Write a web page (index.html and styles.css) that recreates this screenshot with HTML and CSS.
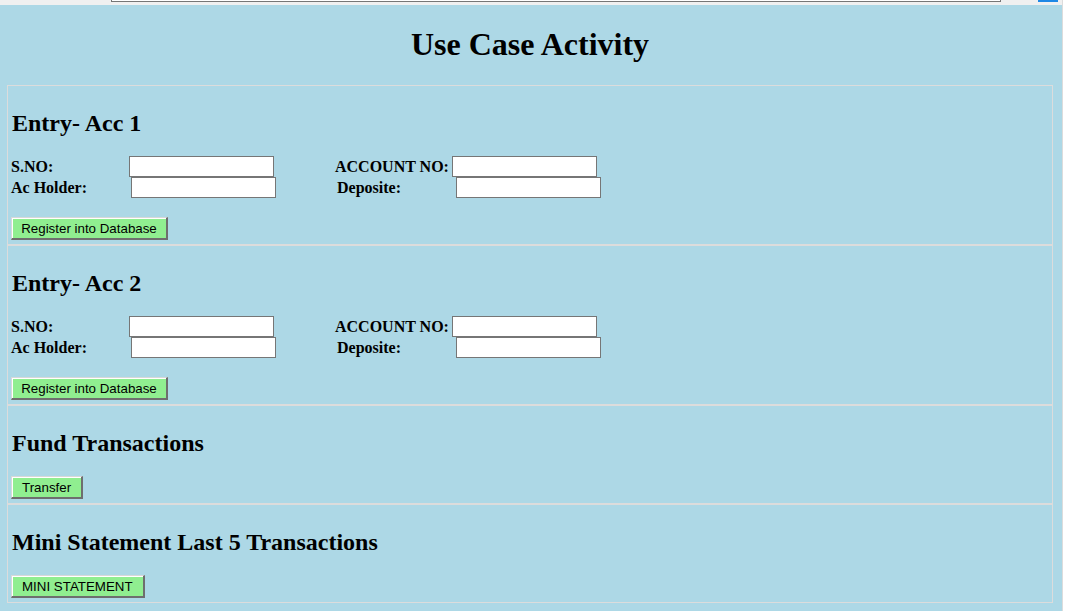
FILE: index.html
```html
<!DOCTYPE html>
<html>
<head>
<meta charset="utf-8">
<title>Use Case Activity</title>
<link rel="stylesheet" href="styles.css">
</head>
<body>
<div class="window">
  <div class="main">
    <div class="chrome">
      <div class="address"></div>
      <div class="chrome-btn"></div>
    </div>
    <div class="page">
      <h1 class="title">Use Case Activity</h1>
      <div class="panel">
        <div class="section">
          <h2 class="heading">Entry- Acc 1</h2>
          <div class="form">
            <div class="row">
              <span class="lbl w118">S.NO:</span><input class="field" type="text">
              <span class="lbl w117 gap">ACCOUNT NO:</span><input class="field" type="text">
            </div>
            <div class="row">
              <span class="lbl w120">Ac Holder:</span><input class="field" type="text">
              <span class="lbl w119 gap">Deposite:</span><input class="field" type="text">
            </div>
          </div>
          <button class="btn btn-form" type="button">Register into Database</button>
        </div>
        <div class="section">
          <h2 class="heading">Entry- Acc 2</h2>
          <div class="form">
            <div class="row">
              <span class="lbl w118">S.NO:</span><input class="field" type="text">
              <span class="lbl w117 gap">ACCOUNT NO:</span><input class="field" type="text">
            </div>
            <div class="row">
              <span class="lbl w120">Ac Holder:</span><input class="field" type="text">
              <span class="lbl w119 gap">Deposite:</span><input class="field" type="text">
            </div>
          </div>
          <button class="btn btn-form" type="button">Register into Database</button>
        </div>
        <div class="section short">
          <h2 class="heading">Fund Transactions</h2>
          <button class="btn" type="button">Transfer</button>
        </div>
        <div class="section short last">
          <h2 class="heading">Mini Statement Last 5 Transactions</h2>
          <button class="btn" type="button">MINI STATEMENT</button>
        </div>
      </div>
    </div>
  </div>
  <div class="edge"></div>
</div>
</body>
</html>
```

FILE: styles.css
```css
* { box-sizing: border-box; }
html, body {
  margin: 0;
  padding: 0;
  height: 611px;
  overflow: hidden;
  background: #ffffff;
}
.window {
  display: flex;
  width: 1066px;
  height: 611px;
}
.main {
  width: 1062px;
  display: flex;
  flex-direction: column;
}
.edge {
  width: 4px;
  border-left: 1px solid #dcdcdc;
  background: #ffffff;
}
.chrome {
  height: 5px;
  background: #f0f0f0;
  display: flex;
  align-items: flex-start;
}
.address {
  margin-left: 111px;
  width: 890px;
  height: 2px;
  border: 1px solid #767676;
  border-top: none;
  background: #ffffff;
}
.chrome-btn {
  margin-left: 37px;
  width: 20px;
  height: 2px;
  background: #1e88e5;
}
.page {
  flex: 1;
  background: #add8e6;
  font-family: "Liberation Serif", "Times New Roman", serif;
  color: #000;
  padding: 0 9px 0 7px;
  overflow: hidden;
}
.title {
  font-size: 32px;
  font-weight: bold;
  text-align: center;
  margin: 21px 0 22px 0;
  line-height: 37px;
}
.panel {
  width: 1046px;
  border: 1px solid #dcdcdc;
}
.section {
  padding: 3px 3px 5px 3px;
  border-bottom: 2px solid #dcdcdc;
  height: 160px;
}
.section.short {
  height: 99px;
}
.section.last {
  border-bottom: none;
  height: 97px;
}
.heading {
  font-size: 24px;
  font-weight: bold;
  line-height: 28px;
  margin: 20px 0 19px 1px;
}
.form {
  display: flex;
  flex-direction: column;
  margin-bottom: 19px;
}
.row {
  display: flex;
  align-items: center;
  height: 21px;
}
.lbl {
  font-size: 16px;
  font-weight: bold;
  line-height: 21px;
  white-space: nowrap;
  flex: none;
}
.w118 { width: 118px; }
.w117 { width: 117px; }
.w120 { width: 120px; }
.w119 { width: 119px; }
.gap { margin-left: 61px; }
.field {
  width: 145px;
  height: 21px;
  border: 1px solid #767676;
  background: #ffffff;
  margin: 0;
  padding: 1px 2px;
  flex: none;
}
.btn {
  display: block;
  font-family: "Liberation Sans", Arial, sans-serif;
  font-size: 13.33px;
  color: #000;
  background: #90ee90;
  height: 23px;
  padding: 0 10px;
  margin: 0;
  border-style: solid;
  border-width: 1px 2px 2px 1px;
  border-color: #d8d8d8 #6e6e6e #6e6e6e #d8d8d8;
  box-shadow: inset 1px 1px 0 #ffffff;
  line-height: 19px;
}
.btn-form {
  width: 157px;
  padding: 0;
}
```
